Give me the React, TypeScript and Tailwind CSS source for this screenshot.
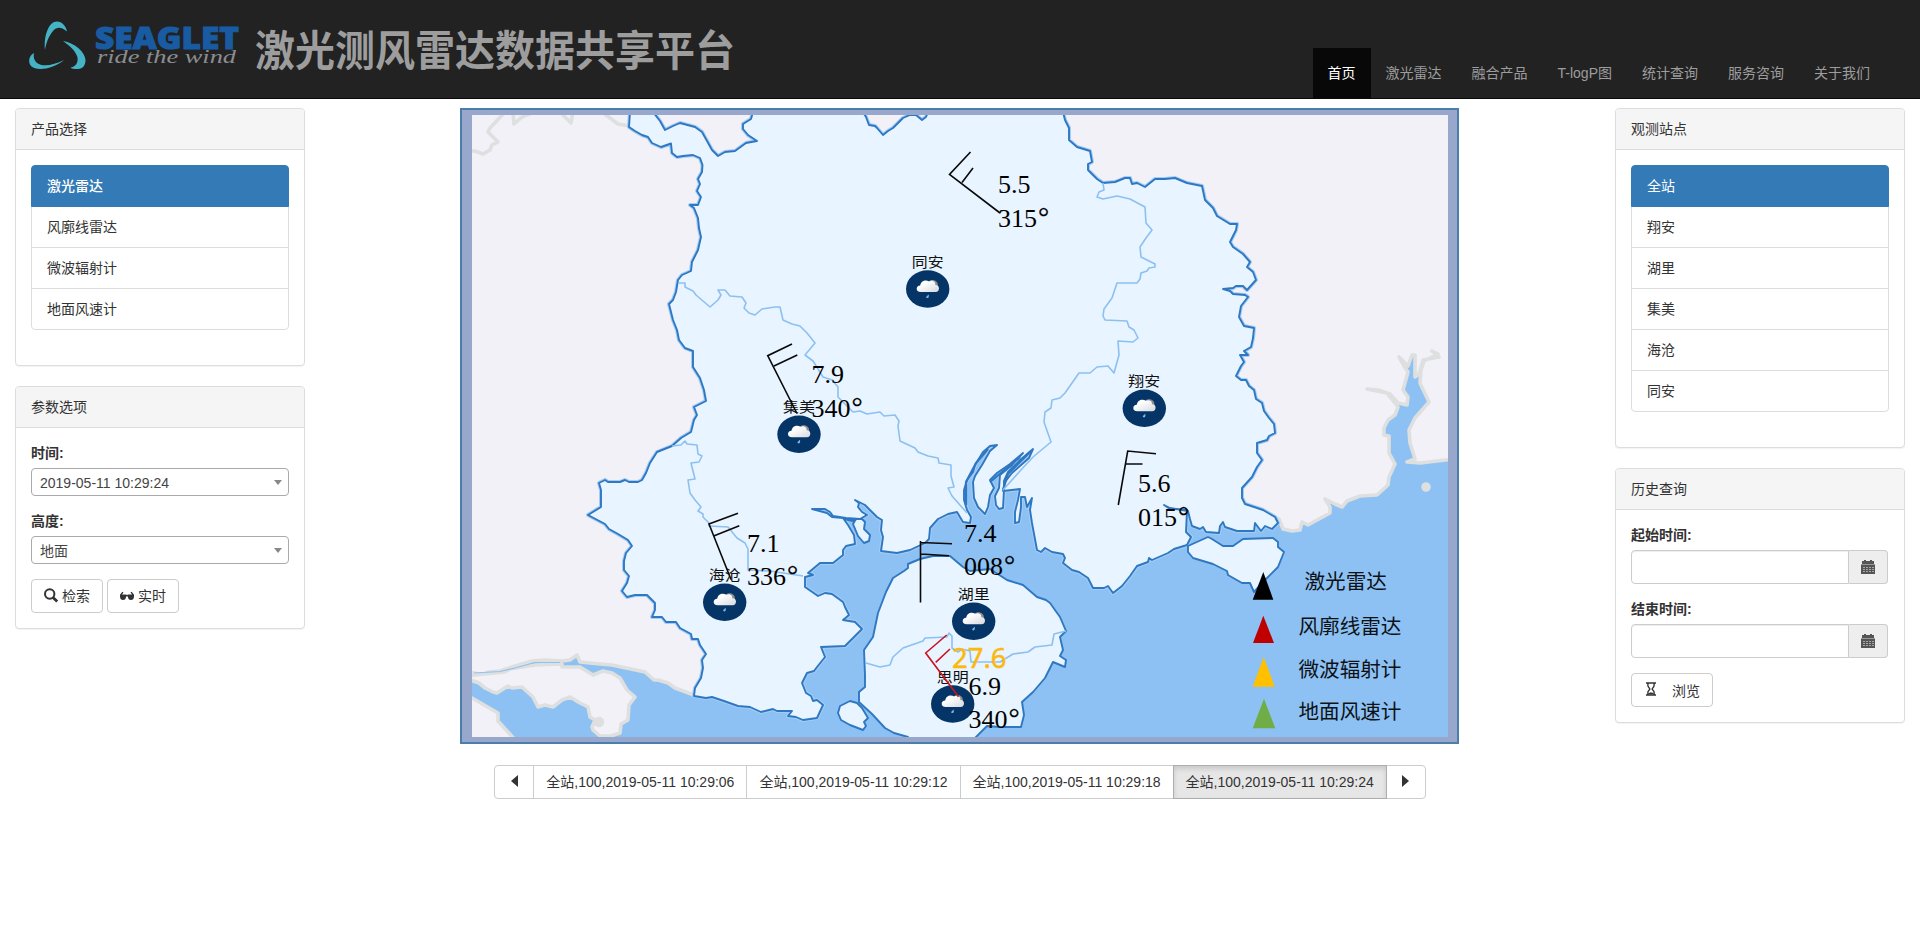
import React from "react";

const SANS = "font-['Liberation_Sans','Noto_Sans_CJK_SC',sans-serif]";

const CITY =
  "M630,112 629,127 635,131 642,135 648,137 652,143 661,147 671,143.5 672,153 677,157 683,156 693,155 700,158 702.5,165 702,172 698,179 700,184 697,191 701,197 698,205 690,205 694,208 698,218 699,228 701,237 698,250 692,262 691,271 682,275 678,280 676,292 673,300 669,304 673,320 677,330 679,340 685,348 693,351 693,367 700,378 704,390 706,401 694,407 697,415 694,420 691,432 681,438 672,446 657,452 650,463 646,473 642,480 638,482 629,482 625,480 620,482 608,482 605,480 599,483 601,490 601,507 588,515 605,524 609,529 618,534 628,540 632,546 626,553 624,561 624,570 629,576 627,583 622,591 627,597 635,595 647,595 655,603 655,610 652,617 662,617 666,622 676,622 680,628 691,634 692,639 698,639 700,645 706,654 702,660 703,668 701,678 695,688 694,696 706,698 712,697 724,701 738,706 750,707 761,712 773,709 777,711 792,711 788,716 796,717 803,720 817,718 823,705 817,700 813,701 811,696 806,693 802,683 807,673 814,671 817,667 825,657 821,647 845,646 862,629 855,622 843,620 849,615 845,607 843,602 832,594 825,593 818,596 805,587 805,577 813,575 808,573 820,563 833,563 843,555 843,550 846,546 855,544 854,535 848,525 843,518 832,517 827,513 812,509 825,509 830,512 833,516 846,518 860,519 867,515 862,512 858,507 859,503 855,500 865,505 871,511 877,517 882,520 881,530 883,537 881,551 897,553 910,550 925,543 929,539 930,528 938,519 948,514 957,512 963,522 970,523 971,517 967,510 964,500 964,490 967,480 973,472 975,465 983,452 990,446 997,445 990,451 982,465 975,476 973,482 974,498 978,507 985,514 988,507 990,495 994,488 990,480 997,473 1010,464 1023,453 1011,466 1000,475 999,488 995,496 996,505 999,509 1003,508 1004,490 1004,481 1008,472 1020,460 1033,449 1029,458 1012,473 1005,482 1003,491 1020,489 1018,500 1015,512 1015,523 1019,522 1021,507 1021,497 1025,497 1027,507 1032,498 1030,510 1032,523 1037,550 1041,552 1045,548 1052,552 1063,554 1065,558 1063,563 1072,570 1079,572 1088,578 1093,588 1104,588 1108,586 1113,593 1122,586 1130,576 1137,566 1148,562 1149,558 1152,560 1168,553 1174,549 1187,545 1191,537 1186,532 1187,510 1177,509 1170,509 1164,505 1170,508 1188,511 1190,519 1192,526 1200,529 1203,527 1206,532 1219,533 1220,526 1223,522 1225,527 1237,531 1254,531 1255,523 1261,531 1265,526 1272,529 1278,523 1275,517 1263,510 1245,504 1242,498 1242,488 1252,477 1257,467 1262,460 1257,453 1257,443 1267,440 1269,436 1275,433 1274,424 1269,418 1264,411 1262,403 1256,399 1254,390 1249,386 1246,380 1241,380 1236,376 1241,366 1244,362 1240,355 1248,355 1244,351 1251,347 1253,338 1254,328 1244,326 1239,317 1241,306 1248,297 1245,295 1233,294 1230,291 1223,289 1233,288 1236,286 1243,286 1247,290 1256,280 1253,272 1247,267 1250,262 1243,254 1233,247 1230,242 1236,230 1237,224 1230,224 1217,216 1213,208 1205,200 1202,186 1187,183 1175,178 1165,179 1155,179 1145,187 1137,183 1132,184 1130,178 1125,178 1115,182 1103,183 1097,179 1088,170 1088,164 1092,162 1090,151 1077,147 1069,140 1069,128 1065,120 1063,112 928,112 926,117 922,120 916,115 910,115 903,118 893,128 888,131 883,135 877,128 875,126 869,125 866,117 863,112 753,112 751,119 743,124 743,129 748,135 757,141 746,143 735,151 725,152 718,156 712,150 702,132 695,127 680,123 673,126 665,130 660,121 653,112Z";

const ISLANDS = [
  "M933,556 950,556 963,567 970,571 990,569 1007,580 1023,585 1037,597 1046,600 1050,603 1060,617 1066,631 1060,637 1063,650 1060,656 1066,660 1065,667 1053,662 1045,678 1033,692 1022,702 1024,715 1021,727 1000,727 987,726 975,738 975,742 908,742 908,737 894,733 885,728 872,714 859,702 859,692 865,687 865,675 864,650 873,637 878,613 886,592 893,578 904,571 908,568 908,564 920,559Z",
  "M850,701 840,706 838,713 841,720 850,725 863,730 866,726 864,722 868,718 862,708 857,703Z",
  "M844,519 856,519 853,524 858,536 864,543 869,541 870,535 864,529 865,522 862,519 857,519 853,521Z",
  "M1188,546 1208,537 1212,539 1223,546 1233,546 1243,539 1273,538 1278,542 1278,547 1284,552 1278,567 1263,582 1254,592 1250,583 1242,583 1228,575 1227,571 1213,564 1193,558 1188,552Z",
];

const DISTRICTS =
  "M678,283H685V287L693,291 696,295 710,307 718,300 721,295 718,290 725,290 730,296 742,297 746,303 744,308 749,313 755,315 762,309 775,307 780,307 783,320 792,324 800,326 807,333 815,343 805,355 813,361 823,377 832,380 838,387 838,397 853,412 860,411 867,414 880,412 884,416 895,415 899,421 898,426 900,441 915,448 918,452 928,456 938,458 939,463 951,465 951,476 954,487 948,488 952,496 967,513 " +
  "M1103,183 1104,190 1099,192 1097,197 1103,199 1117,196 1130,199 1145,207 1146,223 1152,230 1146,238 1140,247 1141,257 1155,264 1155,267 1149,268 1147,271 1141,273 1140,279 1137,283 1117,283 1112,298 1104,309 1103,316 1105,320 1127,321 1129,327 1134,330 1138,338 1133,342 1118,341 1119,355 1114,373 1108,366 1097,367 1090,373 1079,373 1065,393 1060,398 1052,400 1051,408 1045,412 1044,422 1051,442 1033,457 1020,471 1003,490 " +
  "M672,446 681,445 685,441 687,444 697,445 698,454 702,456 699,462 691,463 695,479 688,480 690,493 695,500 701,507 698,511 703,514 703,517 709,523 709,526 728,527 737,538 745,543 748,549V570L770,571 803,576 " +
  "M866,663 880,667 890,665 893,657 903,648 923,641 925,638 947,637 949,633 952,636 952,648 958,652 962,649 970,651 971,662H1000L1013,654 1028,652 1035,647 1052,645 1054,634 1066,631";

const STATIONS = [
  { name: "同安", x: 927.7, y: 289 },
  { name: "翔安", x: 1144.3, y: 408.3 },
  { name: "集美", x: 799, y: 434.3 },
  { name: "海沧", x: 724.7, y: 602.3 },
  { name: "湖里", x: 973.7, y: 621.3 },
  { name: "思明", x: 952.7, y: 704 },
];

const WINDS = [
  { speed: "5.5", dir: "315", x: 998, y: 193 },
  { speed: "7.9", dir: "340", x: 811.5, y: 383 },
  { speed: "7.1", dir: "336", x: 747, y: 551.5 },
  { speed: "7.4", dir: "008", x: 964, y: 541.7 },
  { speed: "5.6", dir: "015", x: 1138, y: 492 },
  { speed: "6.9", dir: "340", x: 968.5, y: 694.5 },
];

const BARBS =
  "M970.5,152 949.5,174.5 1000,213 M962,182.5 973,168 M792,344 767.7,355.7 797,413.5 M774,366 797.3,355 M738,513.3 709,524 731,579.5 M714.3,535.7 739.3,525.7 M920.5,541V602.5 M920.5,542.5 952,543.7 M921,554 949,555.7 M1156,453.7 1127.7,451 1118.3,505 M1126,464H1142.5";

const LEGEND = [
  { label: "激光雷达", x: 1304.5, y: 589, color: "#000", tri: "1263.3,572 1252.7,599.7 1273.3,599.7" },
  { label: "风廓线雷达", x: 1298.5, y: 633.5, color: "#c00000", tri: "1263.3,615.7 1253,643 1274,643" },
  { label: "微波辐射计", x: 1298.5, y: 677, color: "#ffc000", tri: "1263.7,657 1252.7,686.7 1274.7,686.7" },
  { label: "地面风速计", x: 1298.5, y: 719, color: "#70ad47", tri: "1264,698.7 1252.7,728.3 1275.3,728.3" },
];

function RadarMap() {
  return (
    <div className="w-[999px] border-2 border-[#4d7dab] bg-[#98a8cc] py-[5px] pr-[9px] pl-[10px]">
      <svg viewBox="472 115 976 622" width="976" height="622" className="block overflow-hidden">
        <defs>
          <linearGradient id="cloud" x1="0" y1="0" x2="1" y2="1">
            <stop offset="0.3" stopColor="#fff" />
            <stop offset="1" stopColor="#d5d8de" />
          </linearGradient>
        </defs>
        <rect x="472" y="115" width="976" height="622" fill="#8dc1f3" />
        <g fill="#f2f1f8" stroke="#dedfdf" strokeWidth="3.6" strokeLinejoin="round">
          <path d="M465,100H1000V300H720V690L694,695 675,688 668,683 658,680 654,680 645,672 612,665 600,664 580,662 577,655 570,660 562,661 545,660 532,661 512,667 500,671 488,672 484,675 465,671Z" />
          <path d="M465,676 505,672 510,669 535,665 562,664 562,667H580L593,675 603,671 612,673 620,678 627,690 635,697 629,705 628,720 621,724 620,733 611,736 600,736 593,730 592,727 595,720 590,717 588,707 580,703 570,697 562,700 553,707 545,705 538,707 533,697 522,687 512,688 508,686 497,693 493,692 485,688 479,683 465,678Z" />
          <path d="M465,694 498,713 498,721 517,742H465Z" />
          <path d="M930,100H1455V459L1420,463 1407,462 1415,459 1410,443 1409,430 1415,418 1429,402 1420,383 1421,370 1424,361 1438,354 1432,351 1439,357 1423,360 1419,374 1415,377V355L1412,355 1408,366 1399,357 1404,366 1408,372 1403,390 1408,397 1407,405 1398,403 1390,394 1378,390 1367,389 1387,393 1398,407 1395,415 1388,420 1384,428 1384,435 1389,436 1389,453 1395,464 1389,477 1388,485 1377,495 1360,496 1347,501 1342,507 1335,504 1325,499 1330,507V513L1308,525 1302,522 1300,530 1292,531 1283,529 1279,519 1200,500V300H930Z" />
          <path d="M468,151H475L483,154 490,150 492,145 498,142 488,132 490,128 505,112 M513,112 514,124 522,117 532,113 M560,112 571,123 573,112 M602,112 618,124 630,126" fill="none" />
          <circle cx="1426" cy="487" r="3" fill="#dedfdf" />
          <circle cx="599" cy="722" r="3.500" fill="#dedfdf" />
        </g>
        <path d="M474,673 500,671.500 515,668 535,662.500 560,662.500" stroke="#8dc1f3" strokeWidth="1.2" fill="none" />
        <g fill="#e8f4ff" strokeLinejoin="round">
          <path d={CITY} stroke="#a3cdf6" strokeWidth="4" />
          <path d={CITY} stroke="#2f78c1" strokeWidth="1.9" />
          {ISLANDS.map((d) => (
            <path key={d} d={d} stroke="#2f78c1" strokeWidth="1.9" />
          ))}
        </g>
        <path d="M1003,490 1008,474 1031,451 M990,482 1020,457 M966,505 V482 L976,463 988,449" stroke="#2f78c1" strokeWidth="2.2" fill="none" />
        <path d={DISTRICTS} stroke="#8cc0f1" strokeWidth="1.6" fill="none" strokeLinejoin="round" />
        {STATIONS.map((s) => (
          <g key={s.name} transform={`translate(${s.x} ${s.y})`}>
            <ellipse rx="21.7" ry="18.7" fill="#043566" />
            <path d="M1,-7.5C5,-11 11,-8 10,-3L4,-1Z" fill="#8d8d90" />
            <path d="M-7,3C-12.500,3 -12,-3.500 -7.500,-3.500C-7,-8 -2,-10 1.500,-7.500C5,-9.500 8.500,-6.500 7.500,-4C12.500,-4.500 12.500,3 8,3Z" fill="url(#cloud)" />
            <path d="M1,5.500C1.500,8.500 0.500,9.500 -1,9C-2.500,8 -0.500,7 1,5.500Z" fill="#7fb7ee" />
            <text transform="scale(1.14 1)" y="-22.500" textAnchor="middle" fill="#111" className="font-['Noto_Sans_CJK_SC',sans-serif] text-[14px]">
              {s.name}
            </text>
          </g>
        ))}
        <path d={BARBS} stroke="#0a0a0a" strokeWidth="1.6" fill="none" />
        <path d="M946.7,635 925.7,653 958.5,696.7 M935.7,662.3 950,649" stroke="#cc1420" strokeWidth="1.6" fill="none" />
        {WINDS.map((w) => (
          <g key={w.x} fill="#000" className="font-['Liberation_Serif',serif] text-[26px]">
            <text x={w.x} y={w.y}>{w.speed}</text>
            <text x={w.x} y={w.y + 33.5}>
              {w.dir}
              <tspan dx="1" dy="-1" strokeWidth="0.200" stroke="#000" className="text-[28px]">°</tspan>
            </text>
          </g>
        ))}
        <text x="952" y="668" fill="#fbb90f" stroke="#fbb90f" strokeWidth="0.500" className="font-['Noto_Sans',sans-serif] text-[27.500px]">27.6</text>
        {LEGEND.map((l) => (
          <g key={l.label}>
            <polygon points={l.tri} fill={l.color} />
            <text x={l.x} y={l.y} fill="#0c1116" className="font-['Noto_Sans_CJK_SC',sans-serif] text-[20.6px]">
              {l.label}
            </text>
          </g>
        ))}
      </svg>
    </div>
  );
}

function Logo() {
  return (
    <svg width="220" height="60" viewBox="25 15 220 60" className="block shrink-0">
      <g fill="#45b3c6">
        <path d="M45,50C43.500,35 49,21.500 57,21.500C62,21.500 66,26 67,31.500C62,27 57,26 53,31C48,37 46,44 45,50Z" />
        <path d="M63,41C75,43 85,52 85.500,60C85.500,65 83,69 78,69C74,69 71,68.500 70.500,67.500C75,67 78.500,63 77.500,57.500C76,51 70,46 63,41Z" />
        <path d="M34,53C28.500,56 28,62 31,66C36,71 52,70 64,60C54,65 43,67.500 37,63C33.500,60 33.500,56 34,53Z" />
      </g>
      <text x="95" y="48.800" textLength="144" lengthAdjust="spacingAndGlyphs" fill="#195ba3" stroke="#195ba3" strokeWidth="1" className="font-['Open_Sans',sans-serif] text-[29.500px] font-extrabold">
        SEAGLET
      </text>
      <text x="97" y="62.800" textLength="139" lengthAdjust="spacingAndGlyphs" fill="#8b8d90" className="font-['Liberation_Serif',serif] text-[18px] italic">
        ride the wind
      </text>
    </svg>
  );
}

const SearchIcon = () => (
  <svg width="14" height="14" viewBox="0 0 14 14" className="block overflow-visible">
    <circle cx="5.700" cy="5" r="4.700" fill="none" stroke="#333" strokeWidth="2" />
    <path d="M9,8.400 13.200,12.600" stroke="#333" strokeWidth="2.800" />
  </svg>
);

const GlassesIcon = () => (
  <svg width="14" height="14" viewBox="0 0 14 14" className="block" fill="#333">
    <path d="M0,5.800 2.300,2.800 3.500,3.400 1.900,5.400H5.800L7,6 8.200,5.400H12.100L10.500,3.400 11.700,2.800 14,5.800V7.800C13.800,10 12.800,11 11,11C9,11 8.100,10 7.900,7.500H6.100C5.900,10 5,11 3,11C1.200,11 0.200,10 0,7.800Z" />
  </svg>
);

const CalendarIcon = () => (
  <svg width="14" height="14" viewBox="0 0 14 14" className="block" shapeRendering="crispEdges">
    <path d="M1,1H3V0H5V1H9V0H11V1H13V4H14V14H0V4H1Z" fill="#555" />
    <path d="M0,4.500H14" stroke="#999" strokeWidth="1" />
    <path d="M2,7.500H4M5,7.500H7M8,7.500H10M11,7.500H13M2,9.500H4M5,9.500H7M8,9.500H10M11,9.500H13M2,11.500H4M5,11.500H7M8,11.500H10M11,11.500H13" stroke="#a5a5a5" strokeWidth="1" />
  </svg>
);

const HourglassIcon = () => (
  <svg width="14" height="14" viewBox="0 0 14 14" className="mb-[3px] block">
    <path d="M2,1H12M2,13H12" stroke="#333" strokeWidth="1.700" />
    <path d="M3.900,1V3.500C3.900,5.500 5.800,5.700 5.800,7C5.800,8.300 3.900,8.300 3.900,10.300V13M10.100,1V3.500C10.100,5.500 8.200,5.700 8.200,7C8.200,8.300 10.100,8.300 10.100,10.300V13" stroke="#333" strokeWidth="1.400" fill="none" />
    <path d="M4,12.200C4.500,10 9.500,10 10,12.200Z" fill="#333" />
  </svg>
);

function Panel({ title, children }: { title: string; children: React.ReactNode }) {
  return (
    <section className="mb-5 rounded border border-[#ddd] bg-white shadow-[0_1px_1px_rgba(0,0,0,0.05)]">
      <h2 className="rounded-t-[3px] border-b border-[#ddd] bg-[#f5f5f5] px-[15px] py-[10px]">{title}</h2>
      <div className="p-[15px]">{children}</div>
    </section>
  );
}

function ListGroup({ items, bold }: { items: string[]; bold?: boolean }) {
  return (
    <ul className="mb-5">
      {items.map((item, i) => (
        <li
          key={item}
          className={
            i === 0
              ? `relative rounded-t border border-[#337ab7] bg-[#337ab7] px-[15px] py-[10px] text-white ${bold ? "font-medium" : ""}`
              : "-mt-px border border-[#ddd] px-[15px] py-[10px] last:rounded-b"
          }
        >
          {item}
        </li>
      ))}
    </ul>
  );
}

function Select({ label, value }: { label: string; value: string }) {
  return (
    <div className="mb-[15px]">
      <div className="mb-[5px] font-bold">{label}</div>
      <div className="flex h-7 items-center justify-between rounded border border-[#aaa] pr-[6px] pl-2 text-[#444]">
        <span className="pt-px">{value}</span>
        <span className="border-x-4 border-t-[5px] border-x-transparent border-t-[#888]" />
      </div>
    </div>
  );
}

function DateInput({ label }: { label: string }) {
  return (
    <div className="mb-[15px]">
      <div className="mb-[5px] font-bold">{label}</div>
      <div className="flex h-[34px] w-[257px]">
        <input className="w-0 grow rounded-l border border-[#ccc] px-3 shadow-[inset_0_1px_1px_rgba(0,0,0,0.075)] outline-none" />
        <span className="flex w-[39px] items-center justify-center rounded-r border border-l-0 border-[#ccc] bg-[#eee]">
          <CalendarIcon />
        </span>
      </div>
    </div>
  );
}

const BTN = "flex h-[34px] items-center rounded border border-[#ccc] bg-white px-3";

const NAV = ["首页", "激光雷达", "融合产品", "T-logP图", "统计查询", "服务咨询", "关于我们"];
const FRAMES = ["06", "12", "18", "24"];

export default function App() {
  return (
    <div className={`min-h-[945px] w-full bg-white text-[14px] leading-5 text-[#333] ${SANS}`}>
      <header className="flex h-[99px] justify-between border-b border-[#080808] bg-[#222] pr-[35px] pl-[25px]">
        <div className="flex pt-[15px]">
          <Logo />
          <h1 className="ml-[10px] origin-center scale-y-105 pt-[7px] text-[40px] leading-[60px] font-bold whitespace-nowrap text-[#9d9d9d]">
            激光测风雷达数据共享平台
          </h1>
        </div>
        <nav className="flex items-end">
          {NAV.map((n, i) => (
            <a key={n} className={i === 0 ? "bg-[#080808] p-[15px] text-white" : "p-[15px] text-[#9d9d9d]"}>
              {n}
            </a>
          ))}
        </nav>
      </header>
      <main className="flex justify-between px-[15px] pt-[9px]">
        <aside className="w-[290px]">
          <Panel title="产品选择">
            <ListGroup bold items={["激光雷达", "风廓线雷达", "微波辐射计", "地面风速计"]} />
          </Panel>
          <Panel title="参数选项">
            <Select label="时间:" value="2019-05-11 10:29:24" />
            <Select label="高度:" value="地面" />
            <div className="flex gap-1">
              <button className={`${BTN} gap-1`}>
                <SearchIcon />
                检索
              </button>
              <button className={`${BTN} gap-1`}>
                <GlassesIcon />
                实时
              </button>
            </div>
          </Panel>
        </aside>
        <div className="w-[1000px]">
          <RadarMap />
          <div className="mt-[21px] flex h-[34px] justify-center">
            <button className="flex w-10 items-center justify-center rounded-l border border-[#ccc] pb-[2px]">
              <span className="border-y-[6px] border-r-[7px] border-y-transparent border-r-[#333]" />
            </button>
            {FRAMES.map((f, i) => (
              <button
                key={f}
                className={
                  i === 3
                    ? "relative -ml-px border border-[#adadad] bg-[#e6e6e6] px-3 whitespace-nowrap shadow-[inset_0_3px_5px_rgba(0,0,0,0.125)]"
                    : "-ml-px border border-[#ccc] px-3 whitespace-nowrap"
                }
              >
                全站,100,2019-05-11 10:29:{f}
              </button>
            ))}
            <button className="-ml-px flex w-10 items-center justify-center rounded-r border border-[#ccc] pb-[2px]">
              <span className="border-y-[6px] border-l-[7px] border-y-transparent border-l-[#333]" />
            </button>
          </div>
        </div>
        <aside className="w-[290px]">
          <Panel title="观测站点">
            <ListGroup items={["全站", "翔安", "湖里", "集美", "海沧", "同安"]} />
          </Panel>
          <Panel title="历史查询">
            <DateInput label="起始时间:" />
            <DateInput label="结束时间:" />
            <button className={`${BTN} w-[82px] justify-between`}>
              <HourglassIcon />
              <span className="pt-[2px]">浏览</span>
            </button>
          </Panel>
        </aside>
      </main>
    </div>
  );
}
